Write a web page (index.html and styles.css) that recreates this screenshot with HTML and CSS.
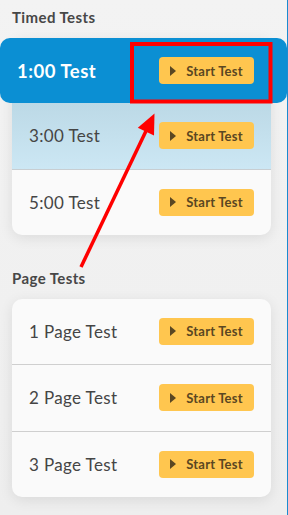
FILE: index.html
```html
<!DOCTYPE html>
<html>
<head>
<meta charset="utf-8">
<link rel="stylesheet" href="styles.css">
</head>
<body>
<div class="screen">
  <h2 class="section-title">Timed Tests</h2>
  <div class="card">
    <div class="row row-selected">
      <span class="label">1:00 Test</span>
      <button class="start"><span class="tri"></span>Start Test</button>
    </div>
    <div class="row row-hover">
      <span class="label">3:00 Test</span>
      <button class="start"><span class="tri"></span>Start Test</button>
    </div>
    <div class="row">
      <span class="label">5:00 Test</span>
      <button class="start"><span class="tri"></span>Start Test</button>
    </div>
  </div>

  <h2 class="section-title second">Page Tests</h2>
  <div class="card">
    <div class="row">
      <span class="label">1 Page Test</span>
      <button class="start"><span class="tri"></span>Start Test</button>
    </div>
    <div class="row">
      <span class="label">2 Page Test</span>
      <button class="start"><span class="tri"></span>Start Test</button>
    </div>
    <div class="row">
      <span class="label">3 Page Test</span>
      <button class="start"><span class="tri"></span>Start Test</button>
    </div>
  </div>

  <svg class="annotation" width="288" height="515" viewBox="0 0 288 515">
    <rect x="132" y="44" width="138.5" height="57.5" fill="none" stroke="#ff0000" stroke-width="4"/>
    <line x1="81" y1="267" x2="146" y2="131" stroke="#ff0000" stroke-width="3.5"/>
    <polygon points="154.5,113.5 154,135.5 137.8,127.7" fill="#ff0000"/>
  </svg>
</div>
</body>
</html>
```

FILE: styles.css
```css
html, body {
  margin: 0;
  padding: 0;
}
body {
  background: #f0f0f0;
  font-family: Lato, "Open Sans", sans-serif;
  width: 288px;
  height: 515px;
  overflow: hidden;
}
.screen {
  position: relative;
  width: 288px;
  height: 515px;
  box-sizing: border-box;
  padding-top: 8px;
  border-right: 1px solid #1b8bd0;
  background: linear-gradient(#f3f3f3, #eeeeee);
}
.section-title {
  margin: 0 0 12px 12px;
  font-size: 15px;
  line-height: 18px;
  font-weight: 700;
  letter-spacing: 0.4px;
  color: #474747;
}
.section-title.second {
  margin-top: 33.5px;
}
.card {
  margin: 0 16px 0 12px;
  background: #fafafa;
  border-radius: 10px;
  box-shadow: 0 3px 14px rgba(0, 0, 0, 0.09);
}
.row {
  display: flex;
  align-items: center;
  justify-content: space-between;
  height: 65.5px;
  padding: 0 17px;
  border-top: 1px solid #cfcfcf;
}
.row:first-child {
  border-top: none;
}
.card > .row:last-child {
  border-radius: 0 0 10px 10px;
}
.label {
  font-size: 17px;
  letter-spacing: 0.35px;
  color: #454545;
  font-weight: 400;
}
.row-selected {
  height: 65px;
  margin: 0 -16px 0 -12px;
  padding: 0 33px 0 17px;
  background: #0b8fd3;
  border-radius: 10px;
}
.row-selected .label {
  color: #ffffff;
  font-size: 18.5px;
  letter-spacing: 0.5px;
  font-weight: 700;
}
.row-hover {
  border-top: none;
  background: linear-gradient(#bcd9e6, #cce7f4);
}
.row-hover + .row {
  border-top: 1px solid #c8ced2;
}
.start {
  display: flex;
  align-items: center;
  justify-content: center;
  gap: 10px;
  width: 95px;
  height: 27px;
  padding: 0;
  border: none;
  border-radius: 4px;
  background: #ffc64f;
  color: #5a4722;
  font-family: Lato, "Open Sans", sans-serif;
  font-size: 13px;
  font-weight: 700;
  letter-spacing: 0.2px;
}
.tri {
  width: 0;
  height: 0;
  border-top: 5px solid transparent;
  border-bottom: 5px solid transparent;
  border-left: 6px solid #5a4722;
}
.annotation {
  position: absolute;
  top: 0;
  left: 0;
}
```
